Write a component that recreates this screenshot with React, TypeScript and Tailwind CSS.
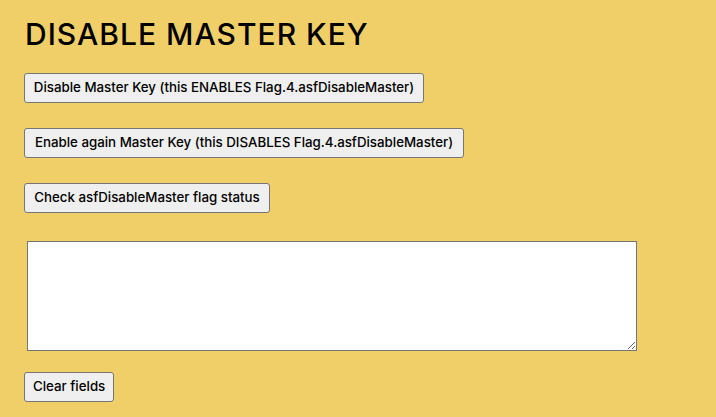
const btn =
  "h-[30px] rounded-[3px] border border-[#767676] bg-[#efefef] px-2 text-[13.3px] font-medium text-black whitespace-nowrap";

export default function App() {
  return (
    <div className="min-h-[417px] w-full bg-[#f0cf69] px-6 pt-[14px] font-['Inter',sans-serif]">
      <h1 className="ml-px text-[30px] font-medium leading-[40px] tracking-[1px] text-black">
        DISABLE MASTER KEY
      </h1>
      <div className="mt-[19px] flex flex-col items-start gap-[25px]">
        <button className={`${btn} w-[400px]`}>
          Disable Master Key (this ENABLES Flag.4.asfDisableMaster)
        </button>
        <button className={`${btn} w-[440px]`}>
          Enable again Master Key (this DISABLES Flag.4.asfDisableMaster)
        </button>
        <button className={`${btn} w-[246px]`}>Check asfDisableMaster flag status</button>
      </div>
      <textarea className="ml-[3px] mt-[28px] block h-[110px] w-[610px] border border-[#767676] bg-white" />
      <button className={`${btn} mt-[21px] w-[90px]`}>Clear fields</button>
    </div>
  );
}
